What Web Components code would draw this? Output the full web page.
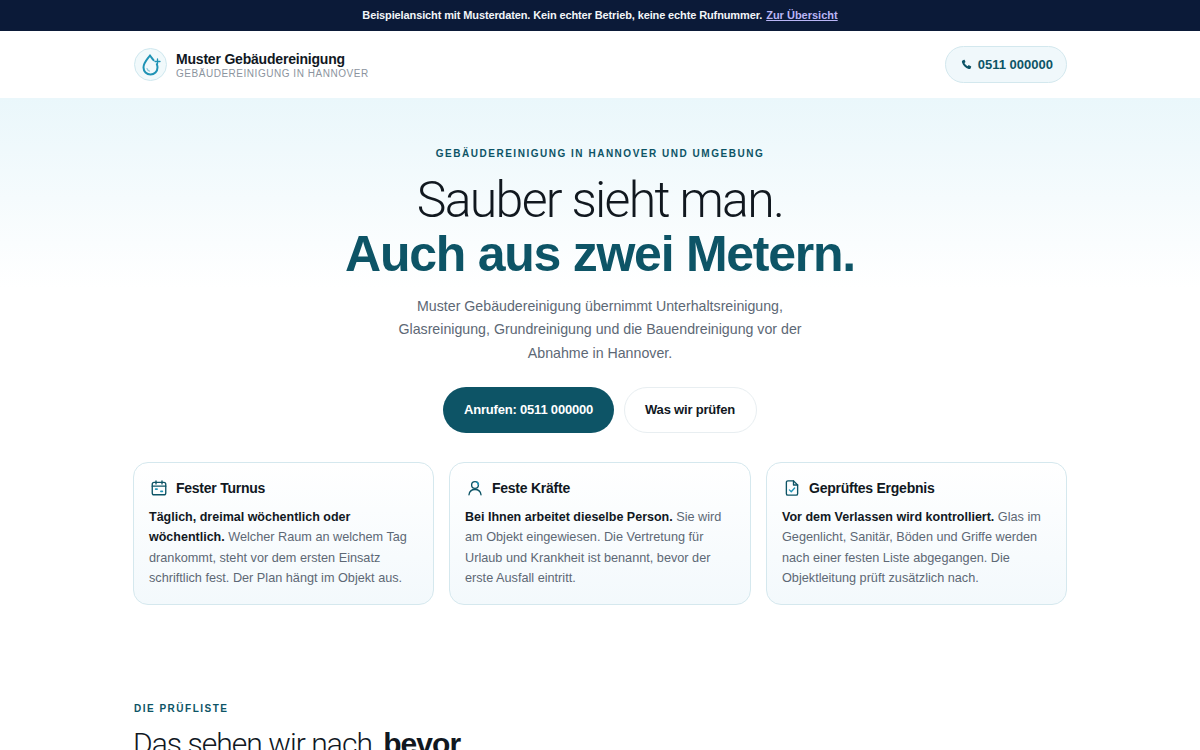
<!DOCTYPE html>
<html lang="de">
<head>
<meta charset="utf-8">
<title>Muster Gebäudereinigung</title>
<style>
html, body { margin: 0; padding: 0; background: #fff; }
body { font-family: "Liberation Sans", Arial, sans-serif; color: #11181f; height: 750px; overflow: hidden; }
</style>
</head>
<body>
<demo-banner></demo-banner>
<site-header></site-header>
<hero-section>
    <feature-card title="Fester Turnus" icon="calendar"><b>Täglich, dreimal wöchentlich oder wöchentlich.</b> Welcher Raum an welchem Tag drankommt, steht vor dem ersten Einsatz schriftlich fest. Der Plan hängt im Objekt aus.</feature-card>
    <feature-card title="Feste Kräfte" icon="person"><b>Bei Ihnen arbeitet dieselbe Person.</b> Sie wird am Objekt eingewiesen. Die Vertretung für Urlaub und Krankheit ist benannt, bevor der erste Ausfall eintritt.</feature-card>
    <feature-card title="Geprüftes Ergebnis" icon="file"><b>Vor dem Verlassen wird kontrolliert.</b> Glas im Gegenlicht, Sanitär, Böden und Griffe werden nach einer festen Liste abgegangen. Die Objektleitung prüft zusätzlich nach.</feature-card>
</hero-section>
<check-intro></check-intro>

<script>
class DemoBanner extends HTMLElement{
    constructor(){
        super();
        this.attachShadow({mode: "open"});
    }

    connectedCallback(){
        this.shadowRoot.innerHTML = `
        <style>
            :host {
                display: flex;
                justify-content: center;
                align-items: center;
                box-sizing: border-box;
                height: 31px;
                padding-bottom: 1px;
                background: #0b1a38;
                color: #f2f5f8;
                font-size: 11px;
                font-weight: 700;
                letter-spacing: -.12px;
            }
            a {
                margin-left: 4px;
                color: #b9b5f5;
                letter-spacing: 0;
                text-decoration: underline;
            }
        </style>
        <span>Beispielansicht mit Musterdaten. Kein echter Betrieb, keine echte Rufnummer.</span>
        <a href="#">Zur Übersicht</a>
        `;
    }
}

class SiteHeader extends HTMLElement{
    constructor(){
        super();
        this.attachShadow({mode: "open"});
    }

    connectedCallback(){
        this.shadowRoot.innerHTML = `
        <style>
            :host {
                display: flex;
                justify-content: space-between;
                align-items: center;
                box-sizing: border-box;
                height: 67px;
                padding: 0 133px;
                background: #fff;
            }
            .brand { display: flex; align-items: center; gap: 9px; }
            .logo {
                box-sizing: border-box;
                width: 33px;
                height: 33px;
                margin-left: 1px;
                display: flex;
                align-items: center;
                justify-content: center;
                border: 1px solid #cfe8ef;
                border-radius: 50%;
                background: #f1f9fb;
            }
            .text { padding-top: 2px; }
            .name { font-size: 14px; font-weight: 700; line-height: 15px; letter-spacing: -.2px; color: #11181f; }
            .sub { font-size: 10px; line-height: 12px; letter-spacing: .53px; color: #8b949e; text-transform: uppercase; margin-top: 1px; }
            .phone {
                box-sizing: border-box;
                display: flex;
                align-items: center;
                gap: 6px;
                height: 37px;
                padding: 0 13px 0 15px;
                border: 1px solid #d3e8ee;
                border-radius: 19px;
                background: #f0f8fb;
                color: #0d5466;
                font-size: 13px;
                font-weight: 700;
            }
        </style>
        <div class="brand">
            <div class="logo">
                <svg width="26" height="28" viewBox="0 0 26 28" fill="none" stroke="#1f93b5" stroke-width="2" stroke-linecap="round" stroke-linejoin="round">
                    <path d="M12 4.500C9.400 8.200 5.500 11.800 5.500 16.500a7 7 0 0 0 14 0c0-1.200-.3-2.300-.7-3.300"/>
                    <path d="M12 4.500c1.200 1.700 2.500 3.200 3.600 4.800"/>
                    <path d="M9 17.500c.4 1.300 1.200 2.200 2.500 2.600" stroke="#8cc9dc" stroke-width="1.200"/>
                    <path d="M19.500 8v5M17 10.500h5" stroke-width="1.300"/>
                </svg>
            </div>
            <div class="text">
                <div class="name">Muster Gebäudereinigung</div>
                <div class="sub">Gebäudereinigung in Hannover</div>
            </div>
        </div>
        <a class="phone">
            <svg width="11" height="11" viewBox="0 0 24 24" fill="#0d5466"><path d="M6.600 1.800 3.400 3.200C2 4 1.800 5.600 2.300 7.400c2.200 7 7.300 12.100 14.300 14.300 1.800.5 3.400.3 4.200-1.100l1.400-3.200c.2-.6 0-1.100-.5-1.400l-4.300-2.400c-.5-.3-1-.2-1.400.2l-1.600 1.900c-3-1.400-5.500-3.900-6.900-6.900l1.900-1.600c.4-.4.5-.9.2-1.400L8 2.300c-.3-.5-.8-.7-1.400-.5z"/></svg>
            <span>0511 000000</span>
        </a>
        `;
    }
}

class HeroSection extends HTMLElement{
    constructor(){
        super();
        this.attachShadow({mode: "open"});
    }

    connectedCallback(){
        this.shadowRoot.innerHTML = `
        <style>
            :host {
                display: block;
                box-sizing: border-box;
                height: 507px;
                padding: 50px 133px 0;
                background: linear-gradient(180deg, #eaf7fb 0, #f5fbfd 100px, #fff 190px);
                text-align: center;
            }
            .eyebrow {
                font-size: 10px;
                line-height: 12px;
                font-weight: 700;
                letter-spacing: 1.52px;
                color: #0d5466;
                text-transform: uppercase;
            }
            h1 {
                margin: 13px 0 0;
                padding-bottom: 1px;
                font-size: 50px;
                line-height: 55px;
                font-weight: 400;
                color: #11181f;
            }
            h1 span { display: block; font-family: Roboto, "Liberation Sans", sans-serif; font-weight: 300; letter-spacing: -1.7px; }
            h1 strong { display: block; margin-top: -1px; font-weight: 700; letter-spacing: -1.26px; color: #0d5466; }
            p {
                width: 440px;
                margin: 12px auto 0;
                font-size: 14.2px;
                line-height: 23.4px;
                color: #5d6875;
            }
            .actions { display: flex; justify-content: center; gap: 10px; margin-top: 22px; }
            .btn {
                box-sizing: border-box;
                display: flex;
                align-items: center;
                height: 46px;
                padding: 0 21px 1px;
                border-radius: 23px;
                font-size: 13px;
                font-weight: 700;
                letter-spacing: -.2px;
            }
            .primary { background: #0d5466; color: #fff; }
            .secondary { padding: 0 21px 1px 20px; background: #fff; border: 1px solid #e8eef1; color: #11181f; }
            .cards { display: grid; grid-template-columns: 301px 302px 301px; gap: 15px; margin-top: 29px; text-align: left; }
        </style>
        <div class="eyebrow">Gebäudereinigung in Hannover und Umgebung</div>
        <h1><span>Sauber sieht man.</span><strong>Auch aus zwei Metern.</strong></h1>
        <p>Muster Gebäudereinigung übernimmt Unterhaltsreinigung, Glasreinigung, Grundreinigung und die Bauendreinigung vor der Abnahme in Hannover.</p>
        <div class="actions">
            <a class="btn primary">Anrufen: 0511 000000</a>
            <a class="btn secondary">Was wir prüfen</a>
        </div>
        <div class="cards"><slot></slot></div>
        `;
    }
}

const CARD_ICONS = {
    calendar: `<rect x="3" y="4.500" width="18" height="16.500" rx="2.500"/><path d="M3 9.500h18M8 2.500v4M16 2.500v4"/><path d="M7.500 13.500h2M14.500 16.500h2" stroke="#1f93b5" stroke-width="2.200"/>`,
    person: `<circle cx="12" cy="8" r="4.500"/><path d="M4 21c.6-4.600 3.800-7 8-7s7.400 2.400 8 7"/><path d="M14.500 4.200a4.500 4.500 0 0 1 2 3" stroke="#1f93b5" stroke-width="2.200"/>`,
    file: `<path d="M14 2.500H6.500a2 2 0 0 0-2 2v15a2 2 0 0 0 2 2h11a2 2 0 0 0 2-2V8z"/><path d="M14 2.500V8h5.500"/><path d="m8.500 14.500 2.500 2.500 4.500-5" stroke="#1f93b5"/>`
};

class FeatureCard extends HTMLElement{
    constructor(){
        super();
        this.attachShadow({mode: "open"});
    }

    connectedCallback(){
        this.shadowRoot.innerHTML = `
        <style>
            :host {
                display: block;
                box-sizing: border-box;
                height: 143px;
                padding: 14px 15px 0;
                border: 1px solid #d5e8ee;
                border-radius: 15px;
                background: linear-gradient(180deg, #fff 0, #f3f9fc 100%);
            }
            .head { display: flex; align-items: center; gap: 8px; height: 21px; }
            svg { width: 18px; height: 18px; margin-left: 1px; flex: none; }
            h3 { margin: 0; font-size: 14px; font-weight: 700; letter-spacing: -.25px; color: #11181f; }
            .body { margin-top: 9px; font-size: 12.700px; line-height: 20.200px; color: #5d6875; }
            ::slotted(b) { color: #11181f; font-size: 12.500px; }
        </style>
        <div class="head">
            <svg viewBox="0 0 24 24" fill="none" stroke="#0d5466" stroke-width="1.800" stroke-linecap="round" stroke-linejoin="round">${CARD_ICONS[this.getAttribute("icon")]}</svg>
            <h3>${this.getAttribute("title")}</h3>
        </div>
        <div class="body"><slot></slot></div>
        `;
    }
}

class CheckIntro extends HTMLElement{
    constructor(){
        super();
        this.attachShadow({mode: "open"});
    }

    connectedCallback(){
        this.shadowRoot.innerHTML = `
        <style>
            :host { display: block; padding: 98px 133px 0; }
            .eyebrow { font-size: 10px; line-height: 12px; font-weight: 700; letter-spacing: 1.5px; color: #0d5466; margin-left: 1px; }
            h2 { margin: 12px 0 0; font-size: 30px; line-height: 34px; font-weight: 300; font-family: Roboto, "Liberation Sans", sans-serif; letter-spacing: -.95px; color: #11181f; }
            strong { font-family: "Liberation Sans", Arial, sans-serif; font-weight: 700; }
        </style>
        <div class="eyebrow">DIE PRÜFLISTE</div>
        <h2>Das sehen wir nach, <strong>bevor</strong></h2>
        `;
    }
}

customElements.define("demo-banner", DemoBanner);
customElements.define("site-header", SiteHeader);
customElements.define("hero-section", HeroSection);
customElements.define("feature-card", FeatureCard);
customElements.define("check-intro", CheckIntro);
</script>
</body>
</html>
